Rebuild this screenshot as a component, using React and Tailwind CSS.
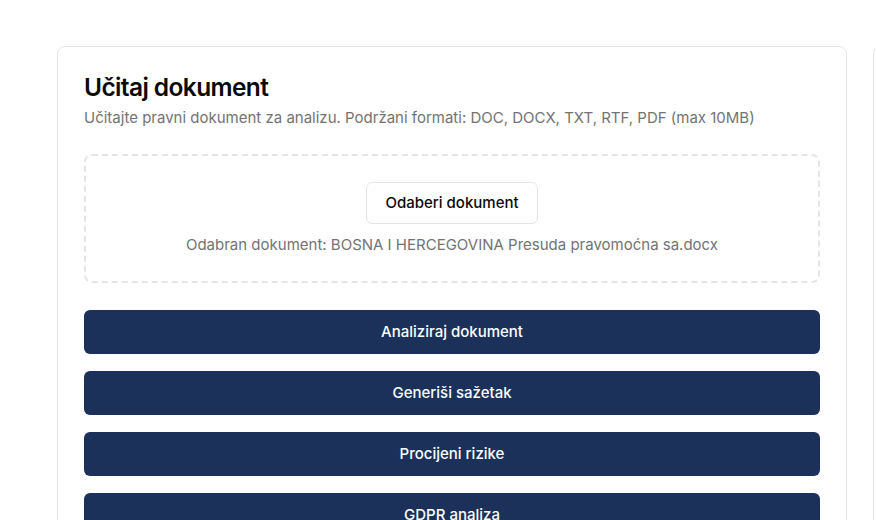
export default function App() {
  const actions = ["Analiziraj dokument", "Generiši sažetak", "Procijeni rizike", "GDPR analiza"];

  return (
    <div
      className="h-[520px] w-[876px] overflow-hidden bg-white"
      style={{ fontFamily: "Inter, 'Noto Sans', sans-serif" }}
    >
      <div className="flex gap-[26px] pl-[57px] pt-[46px]">
        {/* Upload card */}
        <div className="w-[790px] shrink-0 rounded-lg border border-[#e5e5e5] bg-white px-[26px] pt-[24px] pb-6">
          <h2 className="text-[24.5px] leading-8 font-semibold tracking-tight text-[#0a0a0a]">
            Učitaj dokument
          </h2>
          <p className="mt-[5px] text-[15px] leading-5 text-[#737373]">
            Učitajte pravni dokument za analizu. Podržani formati: DOC, DOCX, TXT, RTF, PDF (max 10MB)
          </p>

          <div className="mt-[26px] flex flex-col items-center rounded-lg border-2 border-dashed border-[#e5e5e5] p-[26px]">
            <button className="h-[42px] rounded-md border border-[#e5e5e5] bg-white px-[18px] text-[15px] font-medium text-[#0a0a0a]">
              Odaberi dokument
            </button>
            <p className="mt-[11px] text-[15px] leading-5 text-[#737373]">
              Odabran dokument: BOSNA I HERCEGOVINA Presuda pravomoćna sa.docx
            </p>
          </div>

          <div className="mt-[27px] flex flex-col gap-[17px]">
            {actions.map((a) => (
              <button
                key={a}
                className="h-[44px] w-full rounded-md bg-[#1b3159] text-[15px] font-medium text-white"
              >
                {a}
              </button>
            ))}
          </div>
        </div>

        {/* Second card (cut off) */}
        <div className="h-[600px] w-[400px] shrink-0 rounded-lg border border-[#e5e5e5] bg-white" />
      </div>
    </div>
  );
}
